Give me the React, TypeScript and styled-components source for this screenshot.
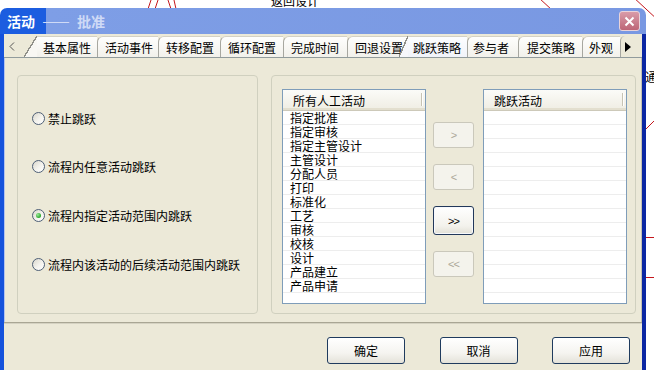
import React from "react";
import styled, { createGlobalStyle } from "styled-components";

// 글로벌 스타일
const GlobalStyle = createGlobalStyle`
  * {
    margin: 0;
    padding: 0;
    box-sizing: border-box;
  }
  html, body {
    width: 100%;
    height: 100%;
    overflow: hidden;
    background: #fff;
  }
  body {
    font-family: "Noto Sans CJK SC", "Liberation Sans", sans-serif;
    font-size: 12px;
    color: #000;
  }
`;

const Stage = styled.div`
  position: relative;
  width: 654px;
  height: 370px;
  overflow: hidden;
  background: #fff;
`;

// diagram behind the dialog
const Canvas = styled.svg`
  position: absolute;
  left: 0;
  top: 0;
`;

const CanvasLabel = styled.span<{ $x: number; $y: number }>`
  position: absolute;
  left: ${(p) => p.$x}px;
  top: ${(p) => p.$y}px;
  font-size: 12px;
  line-height: 12px;
  white-space: nowrap;
`;

const Window = styled.div`
  position: absolute;
  left: 0;
  top: 8px;
  width: 646px;
  height: 380px;
  display: flex;
  flex-direction: column;
`;

const TitleBar = styled.div`
  height: 26px;
  display: flex;
  align-items: center;
  padding: 0 6px 0 7px;
  border-radius: 7px 7px 0 0;
  background: linear-gradient(to right, #1c5de0 0, #1c5de0 46px, #7e9ee6 46px, #7998e2 100%);
  font-size: 14px;
  font-weight: bold;
  color: #fff;
`;

const TitleDash = styled.span`
  margin-left: 8px;
  font-family: "Liberation Sans", sans-serif;
  font-weight: normal;
  letter-spacing: -2px;
  color: #cfdaf6;
`;

const TitleSub = styled.span`
  margin-left: 10px;
  color: #cfdaf6;
`;

const CloseButton = styled.div`
  margin-left: auto;
  width: 21px;
  height: 20px;
  border: 1px solid #e9d3da;
  border-radius: 3px;
  background: linear-gradient(#d99ba8, #bd6677);
  display: flex;
  align-items: center;
  justify-content: center;
`;

const Frame = styled.div`
  flex: 1;
  display: flex;
  flex-direction: column;
  border-left: 4px solid #1552dc;
  border-right: 4px solid #0b27a3;
  background: #ece9d8;
`;

const TabStrip = styled.div`
  height: 24px;
  display: flex;
  align-items: flex-end;
  border-bottom: 1px solid #919b9c;
  background: #ece9d8;
`;

const ScrollArrow = styled.div<{ $w: number; $divider?: boolean }>`
  width: ${(p) => p.$w}px;
  height: 21px;
  display: flex;
  align-items: center;
  padding-left: ${(p) => (p.$divider ? 4 : 5)}px;
  border-left: ${(p) => (p.$divider ? "1px solid #a7a7a0" : "none")};
  border-top-left-radius: 5px;
`;

const Tab = styled.div<{ $w: number; $pad: number; $active?: boolean; $slant?: boolean }>`
  position: relative;
  width: ${(p) => p.$w}px;
  height: 21px;
  padding-left: ${(p) => p.$pad}px;
  line-height: 21px;
  white-space: nowrap;
  background: ${(p) =>
    p.$active ? "linear-gradient(#fcfdff, #f1f3f9)" : "linear-gradient(#fefefd, #f2f1eb)"};
  border-top: 1px solid #d3d1c6;
  border-left: ${(p) => (p.$slant ? "none" : "1px solid #a7a7a0")};
  border-top-left-radius: ${(p) => (p.$slant ? 0 : 6)}px;

  &::before {
    content: "";
    display: ${(p) => (p.$slant ? "block" : "none")};
    position: absolute;
    left: -${(p) => (p.$active ? 9 : 13)}px;
    top: -1px;
    bottom: 0;
    width: ${(p) => (p.$active ? 9 : 13)}px;
    background: linear-gradient(
      to bottom right,
      transparent calc(50% - 0.7px),
      #8f8f88 calc(50% - 0.7px),
      #8f8f88 calc(50% + 0.7px),
      ${(p) => (p.$active ? "#f6f7fb" : "#f8f7f3")} calc(50% + 0.7px)
    );
  }
`;

const TabPage = styled.div`
  height: 264px;
  display: flex;
  gap: 13px;
  padding: 17px 5px 8px 12px;
  border-left: 1px solid #b3c3ee;
  border-right: 1px solid #c4c1b0;
`;

const GroupBox = styled.div`
  border: 1px solid #d0d0bf;
  border-radius: 4px;
`;

const OptionBox = styled(GroupBox)`
  width: 241px;
  display: flex;
  flex-direction: column;
  gap: 34.7px;
  padding: 35px 0 0 14px;
`;

const RadioRow = styled.label`
  height: 14px;
  display: flex;
  align-items: center;
  gap: 3px;
  white-space: nowrap;
`;

const RadioDot = styled.span<{ $checked?: boolean }>`
  flex: none;
  width: 13px;
  height: 13px;
  border-radius: 50%;
  border: 1px solid #4e5f76;
  background: linear-gradient(135deg, #d9d7cc 0%, #f4f3ee 55%, #ffffff 100%);
  display: flex;
  align-items: center;
  justify-content: center;

  &::after {
    content: "";
    display: ${(p) => (p.$checked ? "block" : "none")};
    width: 5px;
    height: 5px;
    border-radius: 50%;
    background: radial-gradient(circle at 35% 35%, #9be89b, #22a322 75%);
  }
`;

const TransferBox = styled(GroupBox)`
  flex: 1;
  display: flex;
  padding: 13px 7px 9px 10px;
`;

const ListView = styled.div`
  width: 144px;
  border: 1px solid #7f9db9;
  background: #fff;
  overflow: hidden;
`;

const ListHeader = styled.div`
  position: relative;
  height: 21px;
  line-height: 21px;
  padding-left: 10px;
  background: linear-gradient(#fbfbf8, #efede3);
  border-bottom: 1px solid #cdc9b9;
  box-shadow: inset 0 -2px 0 #e3dfcf;

  &::after {
    content: "";
    position: absolute;
    right: 3px;
    top: 3px;
    bottom: 4px;
    width: 1px;
    background: #c7c3b3;
    box-shadow: 1px 0 0 #fff;
  }
`;

const ListRow = styled.div`
  height: 14px;
  line-height: 13px;
  padding-left: 7px;
  border-bottom: 1px solid #ededed;
  white-space: nowrap;
`;

const ButtonColumn = styled.div`
  width: 41px;
  margin: 0 9px 0 7px;
  display: flex;
  flex-direction: column;
  gap: 16px;
  padding-top: 33px;
`;

const SideButton = styled.div<{ $enabled?: boolean }>`
  height: ${(p) => (p.$enabled ? 29 : 26)}px;
  display: flex;
  align-items: center;
  justify-content: center;
  border-radius: 3px;
  font-family: "Liberation Sans", sans-serif;
  font-size: 11px;
  letter-spacing: -1px;
  border: 1px solid ${(p) => (p.$enabled ? "#22385a" : "#cac8bb")};
  background: ${(p) =>
    p.$enabled ? "linear-gradient(#ffffff, #f3f2ec 70%, #e2e0d6)" : "#f4f3ec"};
  color: ${(p) => (p.$enabled ? "#000" : "#aca899")};
  box-shadow: ${(p) => (p.$enabled ? "inset 0 0 0 1px #f6f8fc" : "none")};
`;

const Separator = styled.div`
  height: 2px;
  background: #a9a694;
  border-bottom: 1px solid #d5d2c2;
`;

const Footer = styled.div`
  display: flex;
  justify-content: flex-end;
  gap: 34.5px;
  padding: 13px 12px 0 0;
`;

const DialogButton = styled.div`
  width: 78px;
  height: 27px;
  display: flex;
  align-items: center;
  justify-content: center;
  border: 1px solid #1f3b5e;
  border-radius: 3px;
  background: linear-gradient(#ffffff, #f5f4f0 60%, #e4e2d9);
  font-size: 12px;
`;

const tabs = [
  { label: "基本属性", w: 60, pad: 6, slant: true },
  { label: "活动事件", w: 61, pad: 7 },
  { label: "转移配置", w: 62, pad: 7 },
  { label: "循环配置", w: 63, pad: 7 },
  { label: "完成时间", w: 64, pad: 7 },
  { label: "回退设置", w: 61, pad: 7 },
  { label: "跳跃策略", w: 59, pad: 5, slant: true, active: true },
  { label: "参与者", w: 51, pad: 5 },
  { label: "提交策略", w: 64, pad: 8 },
  { label: "外观", w: 38, pad: 6 },
];

const options = [
  { label: "禁止跳跃" },
  { label: "流程内任意活动跳跃" },
  { label: "流程内指定活动范围内跳跃", checked: true },
  { label: "流程内该活动的后续活动范围内跳跃" },
];

const activities = [
  "指定批准",
  "指定审核",
  "指定主管设计",
  "主管设计",
  "分配人员",
  "打印",
  "标准化",
  "工艺",
  "审核",
  "校核",
  "设计",
  "产品建立",
  "产品申请",
  "",
];

const emptyRows = Array.from({ length: 14 }, () => "");

const App = () => {
  return (
    <>
      <GlobalStyle />
      <Stage>
        <Canvas width="654" height="370">
          <g stroke="#c4161c" strokeWidth="1" fill="none">
            <line x1="151" y1="0" x2="148" y2="9" />
            <line x1="158" y1="0" x2="155" y2="9" />
            <line x1="168" y1="0" x2="171" y2="9" />
            <line x1="174" y1="0" x2="176" y2="9" />
            <line x1="539" y1="-2" x2="552" y2="10" />
            <line x1="632" y1="-4" x2="660" y2="22" />
            <line x1="646" y1="129" x2="656" y2="119" />
            <line x1="646" y1="237.5" x2="654" y2="237.5" />
            <line x1="646" y1="277.5" x2="654" y2="277.5" />
          </g>
        </Canvas>
        <CanvasLabel $x={271} $y={-5}>返回设计</CanvasLabel>
        <CanvasLabel $x={645} $y={71}>通</CanvasLabel>

        <Window>
          <TitleBar>
            活动
            <TitleDash>——</TitleDash>
            <TitleSub>批准</TitleSub>
            <CloseButton>
              <svg width="11" height="11" viewBox="0 0 11 11">
                <path d="M1.5 1.5 L9.5 9.5 M9.5 1.5 L1.5 9.5" stroke="#fff" strokeWidth="2" />
              </svg>
            </CloseButton>
          </TitleBar>

          <Frame>
            <TabStrip>
              <ScrollArrow $w={33}>
                <svg width="6" height="9" viewBox="0 0 6 9">
                  <path d="M5 0.5 L1 4.5 L5 8.5" stroke="#555" strokeWidth="1" fill="none" />
                </svg>
              </ScrollArrow>
              {tabs.map((t) => (
                <Tab key={t.label} $w={t.w} $pad={t.pad} $slant={t.slant} $active={t.active}>
                  {t.label}
                </Tab>
              ))}
              <ScrollArrow $w={22} $divider>
                <svg width="6" height="10" viewBox="0 0 6 10">
                  <path d="M0 0 L6 5 L0 10 Z" fill="#000" />
                </svg>
              </ScrollArrow>
            </TabStrip>

            <TabPage>
              <OptionBox>
                {options.map((o) => (
                  <RadioRow key={o.label}>
                    <RadioDot $checked={o.checked} />
                    {o.label}
                  </RadioRow>
                ))}
              </OptionBox>

              <TransferBox>
                <ListView>
                  <ListHeader>所有人工活动</ListHeader>
                  {activities.map((a, i) => (
                    <ListRow key={i}>{a}</ListRow>
                  ))}
                </ListView>
                <ButtonColumn>
                  <SideButton>&gt;</SideButton>
                  <SideButton>&lt;</SideButton>
                  <SideButton $enabled>&gt;&gt;</SideButton>
                  <SideButton>&lt;&lt;</SideButton>
                </ButtonColumn>
                <ListView>
                  <ListHeader>跳跃活动</ListHeader>
                  {emptyRows.map((a, i) => (
                    <ListRow key={i}>{a}</ListRow>
                  ))}
                </ListView>
              </TransferBox>
            </TabPage>

            <Separator />
            <Footer>
              <DialogButton>确定</DialogButton>
              <DialogButton>取消</DialogButton>
              <DialogButton>应用</DialogButton>
            </Footer>
          </Frame>
        </Window>
      </Stage>
    </>
  );
};

export default App;
